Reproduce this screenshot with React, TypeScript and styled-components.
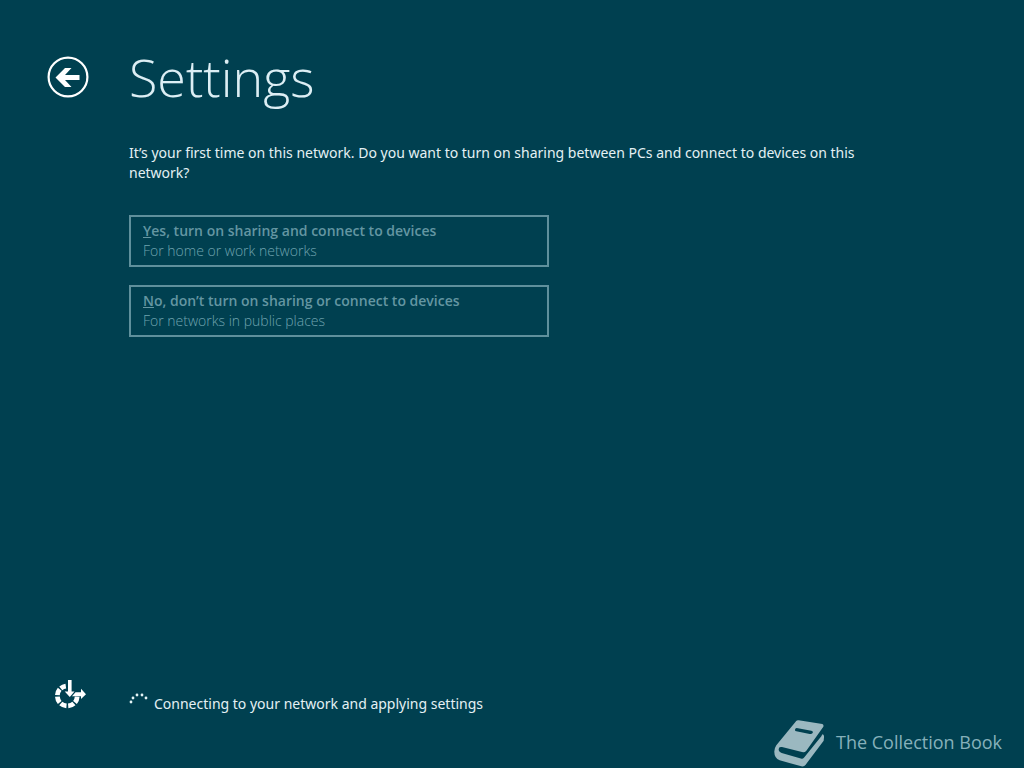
import React from "react";
import styled, { createGlobalStyle } from "styled-components";

const GlobalStyle = createGlobalStyle`
  * { box-sizing: border-box; }
  body {
    margin: 0;
    background: #004050;
    color: #e4f1f4;
    font-family: "Segoe UI", "Open Sans", sans-serif;
    font-size: 14px;
    line-height: 20px;
  }
`;

const Page = styled.div`
  min-height: 100vh;
  display: flex;
  flex-direction: column;
`;

const Header = styled.header`
  display: grid;
  grid-template-columns: 82px 1fr;
  align-items: center;
  padding: 40px 47px 0;
`;

const BackButton = styled.button`
  width: 42px;
  height: 42px;
  padding: 0;
  border: 0;
  border-radius: 50%;
  background: none;
  cursor: pointer;
  svg { display: block; }
`;

const Title = styled.h1`
  margin: 0;
  color: #dceef4;
  font-size: 52px;
  font-weight: 300;
  line-height: 74px;
`;

const Main = styled.main`
  flex: 1;
  padding: 29px 129px 0;
`;

const Question = styled.p`
  margin: 0;
  font-family: "Segoe UI", "Noto Sans", sans-serif;
`;

const Choices = styled.div`
  display: flex;
  flex-direction: column;
  gap: 18px;
  max-width: 420px;
  margin-top: 32px;
`;

const ChoiceButton = styled.button`
  display: block;
  padding: 4px 12px;
  border: 2px solid #5f909c;
  background: none;
  color: #6496a2;
  font: inherit;
  text-align: left;
`;

const ChoiceTitle = styled.span`
  display: block;
  font-weight: 600;
`;

const ChoiceNote = styled.span`
  display: block;
  color: #6fa3af;
  font-weight: 300;
`;

const Footer = styled.footer`
  display: flex;
  justify-content: space-between;
  align-items: flex-start;
  padding: 0 22px 0 53px;
`;

const Status = styled.div`
  display: grid;
  grid-template-columns: 76px 25px auto;
  align-items: start;
`;

const StatusText = styled.p`
  margin: 0;
  padding-top: 16px;
  font-family: "Segoe UI", "Noto Sans", sans-serif;
`;

const Spinner = styled.svg`
  margin-top: 14px;
`;

const Brand = styled.div`
  display: flex;
  align-items: center;
  gap: 12px;
  margin-top: 42px;
  color: #86b0ba;
  font-size: 18px;
  line-height: 24px;
`;

const BrandName = styled.span`
  padding-bottom: 4px;
`;

const BackIcon = () => (
  <svg width="42" height="42" viewBox="0 0 42 42" aria-hidden="true">
    <circle cx="21" cy="21" r="19.4" fill="none" stroke="#fff" strokeWidth="2.2" />
    <path d="M8.500 21.500 18 12H24.500L18 19H32.500V24H18L24.500 31H18Z" fill="#fff" />
  </svg>
);

const EaseOfAccessIcon = () => (
  <svg width="34" height="34" viewBox="0 0 34 34" role="img" aria-label="Ease of access">
    <g fill="none" stroke="#fff" strokeWidth="4.800">
      <path d="M24.200 18.700A10 10 0 0 1 22 24.500" />
      <path d="M20.900 25.500A10 10 0 0 1 15.200 27.900" />
      <path d="M13.500 27.900A10 10 0 0 1 7.800 25.500" />
      <path d="M6.700 24.500A10 10 0 0 1 4.400 18.700" />
      <path d="M4.400 17.100A10 10 0 0 1 6.700 11.300" />
      <path d="M7.800 10.300A10 10 0 0 1 12.800 8.100" />
    </g>
    <path d="M15 2H18.600V13.500H21.500L16.800 19 11.700 13.500H15Z" fill="#fff" />
    <path d="M19 18.200 22.500 14.200H28V10.800L33 16.200 28 21V18.200Z" fill="#fff" />
  </svg>
);

const dots = [
  [2, 10],
  [4, 6],
  [8, 3],
  [13, 3],
  [17, 6],
];

const BookIcon = () => (
  <svg width="50" height="48" viewBox="0 0 150 144" aria-hidden="true">
    <path
      fill="#9bb8c0"
      fillRule="evenodd"
      d="M66 4Q69 0 74 1L145 12Q150 14 148 20L97 92Q92 98 84 96L24 81Q14 79 14 88Q14 96 23 99L83 116Q88 117 91 112L142 49L145 43Q151 44 150 52L149 62L95 134Q90 141 82 139L17 121Q0 114 1 94Q1 85 7 76ZM64 26Q61 33 67 34L107 42Q113 43 116 39Q118 33 112 32L72 25Q67 23 64 26Z"
    />
  </svg>
);

export default function App() {
  return (
    <Page>
      <GlobalStyle />
      <Header>
        <BackButton type="button" aria-label="Back">
          <BackIcon />
        </BackButton>
        <Title>Settings</Title>
      </Header>
      <Main>
        <Question>
          It’s your first time on this network. Do you want to turn on sharing between PCs and connect to devices on
          this network?
        </Question>
        <Choices>
          <ChoiceButton type="button" disabled>
            <ChoiceTitle>
              <u>Y</u>es, turn on sharing and connect to devices
            </ChoiceTitle>
            <ChoiceNote>For home or work networks</ChoiceNote>
          </ChoiceButton>
          <ChoiceButton type="button" disabled>
            <ChoiceTitle>
              <u>N</u>o, don’t turn on sharing or connect to devices
            </ChoiceTitle>
            <ChoiceNote>For networks in public places</ChoiceNote>
          </ChoiceButton>
        </Choices>
      </Main>
      <Footer>
        <Status role="status">
          <EaseOfAccessIcon />
          <Spinner width="20" height="20" viewBox="0 0 20 20" aria-hidden="true">
            {dots.map(([x, y]) => (
              <circle key={x} cx={x} cy={y} r="1.400" fill="#e4f4f6" />
            ))}
          </Spinner>
          <StatusText>Connecting to your network and applying settings</StatusText>
        </Status>
        <Brand>
          <BookIcon />
          <BrandName>The Collection Book</BrandName>
        </Brand>
      </Footer>
    </Page>
  );
}
